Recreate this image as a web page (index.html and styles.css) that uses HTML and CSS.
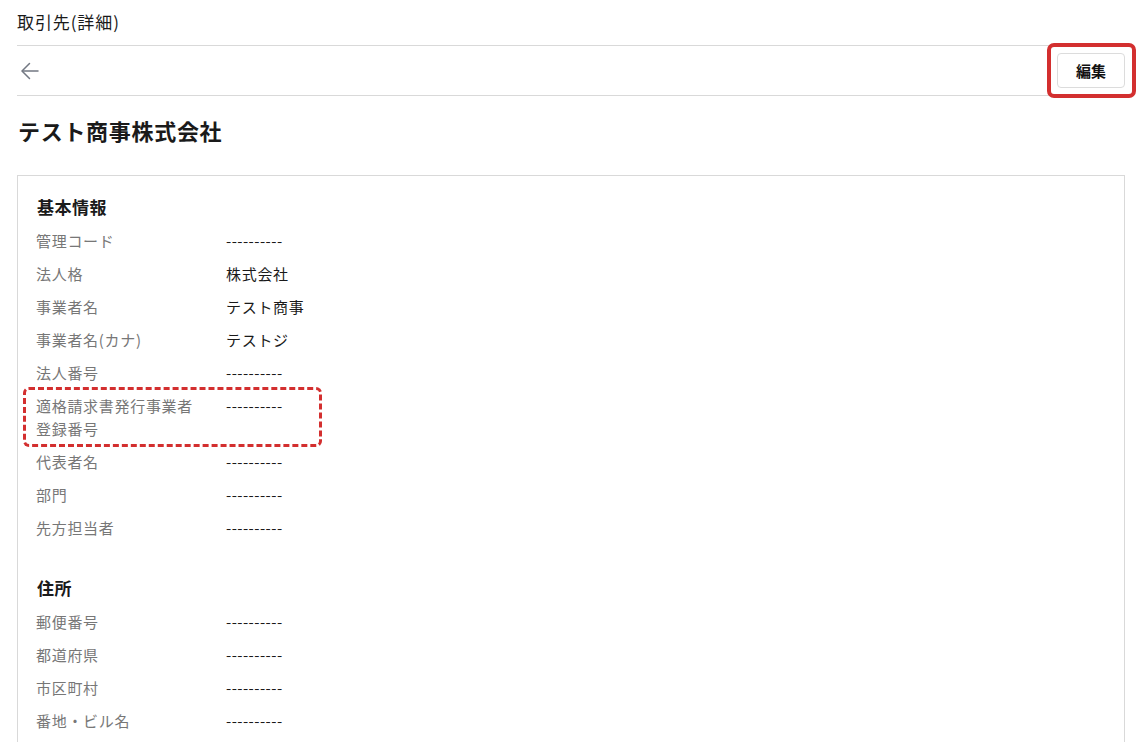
FILE: index.html
```html
<!DOCTYPE html>
<html lang="ja">
<head>
    <meta charset="UTF-8">
    <title>取引先(詳細)</title>
    <link rel="stylesheet" href="styles.css">
</head>
<body>
    <div class="pagina">
        <div class="titulo-pagina">取引先(詳細)</div>

        <div class="barra">
            <button class="volver" aria-label="戻る">
                <svg width="20" height="20" viewBox="0 0 20 20" fill="none" stroke="#737883" stroke-width="1.5" stroke-linecap="round" stroke-linejoin="round">
                    <path d="M18 10H2.5"/>
                    <path d="M9.5 2.5L2 10l7.5 7.5"/>
                </svg>
            </button>
            <span class="marca">
                <button class="editar">編集</button>
            </span>
        </div>

        <h1 class="empresa">テスト商事株式会社</h1>

        <div class="tarjeta">
            <div class="seccion">
                <h2>基本情報</h2>
                <div class="fila"><span class="etiqueta">管理コード</span><span class="valor vacio">----------</span></div>
                <div class="fila"><span class="etiqueta">法人格</span><span class="valor">株式会社</span></div>
                <div class="fila"><span class="etiqueta">事業者名</span><span class="valor">テスト商事</span></div>
                <div class="fila"><span class="etiqueta">事業者名(カナ)</span><span class="valor">テストジ</span></div>
                <div class="fila"><span class="etiqueta">法人番号</span><span class="valor vacio">----------</span></div>
                <div class="fila resaltada"><span class="etiqueta">適格請求書発行事業者登録番号</span><span class="valor vacio">----------</span></div>
                <div class="fila"><span class="etiqueta">代表者名</span><span class="valor vacio">----------</span></div>
                <div class="fila"><span class="etiqueta">部門</span><span class="valor vacio">----------</span></div>
                <div class="fila"><span class="etiqueta">先方担当者</span><span class="valor vacio">----------</span></div>
            </div>

            <div class="seccion">
                <h2>住所</h2>
                <div class="fila"><span class="etiqueta">郵便番号</span><span class="valor vacio">----------</span></div>
                <div class="fila"><span class="etiqueta">都道府県</span><span class="valor vacio">----------</span></div>
                <div class="fila"><span class="etiqueta">市区町村</span><span class="valor vacio">----------</span></div>
                <div class="fila"><span class="etiqueta">番地・ビル名</span><span class="valor vacio">----------</span></div>
            </div>
        </div>
    </div>
</body>
</html>
```

FILE: styles.css
```css
body {
    margin: 0;
    font-family: "Noto Sans CJK JP", "Noto Sans", sans-serif;
    color: #1a1a1a;
    background: white;
}
.pagina {
    padding: 0 13px 0 17px;
}
.titulo-pagina {
    font-size: 17px;
    letter-spacing: 0.9px;
    line-height: 24px;
    padding: 10px 0 11px;
    border-bottom: 1px solid #d9d9d9;
}
.barra {
    display: flex;
    align-items: center;
    justify-content: space-between;
    height: 49px;
    border-bottom: 1px solid #d9d9d9;
}
.volver {
    border: none;
    background: none;
    padding: 0;
    margin-left: 3px;
    width: 20px;
    height: 20px;
    cursor: pointer;
}
.marca {
    position: relative;
    display: flex;
}
.marca::after {
    content: "";
    position: absolute;
    top: -10px;
    bottom: -10px;
    left: -10px;
    right: -11px;
    border: 4px solid #d32f2f;
    border-radius: 7px;
    pointer-events: none;
}
.editar {
    width: 68px;
    height: 35px;
    border: 1px solid #dcdcdc;
    border-radius: 4px;
    background: white;
    font-family: inherit;
    font-size: 15px;
    font-weight: bold;
    color: #111;
    cursor: pointer;
}
.empresa {
    font-size: 22px;
    letter-spacing: 0.7px;
    line-height: 30px;
    font-weight: bold;
    margin: 19px 0 30px 1px;
}
.tarjeta {
    border: 1px solid #d9d9d9;
    padding: 19px 18px 20px;
}
.seccion + .seccion {
    margin-top: 32px;
}
.seccion h2 {
    font-size: 17px;
    letter-spacing: 0.5px;
    line-height: 24px;
    font-weight: bold;
    margin: 0 0 5px 1px;
}
.fila {
    display: flex;
    font-size: 15px;
    letter-spacing: 0.7px;
    line-height: 23px;
    padding: 5px 0;
}
.etiqueta {
    width: 168px;
    margin-right: 22px;
    color: #777;
}
.valor {
    color: #1a1a1a;
}
.vacio {
    letter-spacing: 0.45px;
}
.resaltada {
    position: relative;
}
.resaltada::after {
    content: "";
    position: absolute;
    left: -13px;
    top: -2px;
    width: 299px;
    height: 60px;
    box-sizing: border-box;
    border: 3px dashed #d32f2f;
    border-radius: 6px;
    pointer-events: none;
}
```
